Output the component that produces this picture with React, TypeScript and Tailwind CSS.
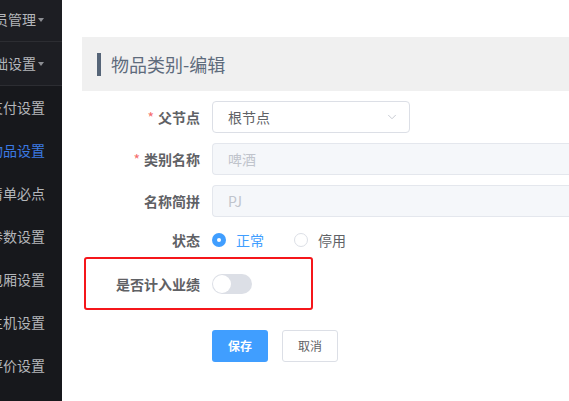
import { ChevronDown } from "lucide-react";

const font = { fontFamily: '"Noto Sans CJK SC", "Noto Sans", sans-serif' };

const subItems = ["支付设置", "物品设置", "清单必点", "参数设置", "包厢设置", "主机设置", "评价设置"];

function Sidebar() {
  return (
    <aside className="w-[62px] shrink-0 h-full overflow-hidden bg-[#17181c] text-[14px]">
      <div className="-mt-[2px]">
        {["会员管理", "基础设置"].map((t) => (
          <div key={t} className="h-[44px] flex items-center bg-[#1d1e23] border-b border-[#2c2d32] -ml-[20px] whitespace-nowrap text-[#b4b6ba]">
            <span>{t}</span>
            <span className="ml-[2px] w-0 h-0 border-l-[3px] border-r-[3px] border-t-[4px] border-l-transparent border-r-transparent border-t-[#8c8e93]" />
          </div>
        ))}
        {subItems.map((t) => (
          <div
            key={t}
            className={`h-[43px] flex items-center -ml-[11px] whitespace-nowrap ${t === "物品设置" ? "text-[#3b7ae3]" : "text-[#b4b6ba]"}`}
          >
            {t}
          </div>
        ))}
      </div>
    </aside>
  );
}

function Label({ text, required }: { text: string; required?: boolean }) {
  return (
    <div className="w-[130px] shrink-0 pr-3 text-right text-[14px] font-bold text-[#5f6165]">
      {required && <span className="text-[#f56c6c] mr-1 font-normal">*</span>}
      {text}
    </div>
  );
}

export default function App() {
  return (
    <div className="w-[569px] h-[401px] flex bg-white overflow-hidden" style={font}>
      <Sidebar />
      <main className="flex-1 min-w-0 pl-5 pt-[37px]">
        <div className="h-[54px] bg-[#f0f0f0] flex items-center pl-[15px]">
          <div className="w-[4px] h-[23px] bg-[#566578]" />
          <span className="ml-[10px] text-[18px] text-[#5e6b7c]">物品类别-编辑</span>
        </div>

        <div className="mt-[10px] flex flex-col gap-[10px]">
          <div className="flex items-center h-[32px]">
            <Label text="父节点" required />
            <div className="w-[198px] h-[32px] rounded-[4px] border border-[#dcdfe6] flex items-center justify-between pl-[15px] pr-[10px] text-[14px] text-[#606266]">
              <span>根节点</span>
              <ChevronDown className="w-[14px] h-[14px] text-[#c0c4cc]" strokeWidth={1.5} />
            </div>
          </div>

          <div className="flex items-center h-[32px]">
            <Label text="类别名称" required />
            <div className="flex-1 h-[32px] rounded-l-[4px] border border-r-0 border-[#e4e7ed] bg-[#f5f7fa] flex items-center pl-[15px] text-[14px] text-[#c0c4cc]">
              啤酒
            </div>
          </div>

          <div className="flex items-center h-[32px]">
            <Label text="名称简拼" />
            <div className="flex-1 h-[32px] rounded-l-[4px] border border-r-0 border-[#e4e7ed] bg-[#f5f7fa] flex items-center pl-[15px] text-[14px] text-[#c0c4cc]">
              PJ
            </div>
          </div>

          <div className="flex items-center h-[32px] -mt-[3px]">
            <Label text="状态" />
            <div className="flex items-center text-[14px]">
              <span className="w-[14px] h-[14px] rounded-full bg-[#409eff] flex items-center justify-center">
                <span className="w-[4px] h-[4px] rounded-full bg-white" />
              </span>
              <span className="ml-[10px] text-[#409eff]">正常</span>
              <span className="ml-[30px] w-[14px] h-[14px] rounded-full border border-[#dcdfe6] bg-white" />
              <span className="ml-[10px] text-[#606266]">停用</span>
            </div>
          </div>

          <div className="relative flex items-center h-[32px] mt-[2px]">
            <div className="absolute left-[2px] -top-[11px] w-[229px] h-[53px] border-2 border-[#f5161b] rounded-[3px]" />
            <Label text="是否计入业绩" />
            <div className="w-[40px] h-[20px] rounded-full bg-[#dcdfe6] flex items-center px-[1px]">
              <span className="w-[18px] h-[18px] rounded-full bg-white" />
            </div>
          </div>

          <div className="flex items-center mt-[20px]">
            <div className="w-[130px] shrink-0" />
            <button className="w-[56px] h-[32px] rounded-[3px] bg-[#409eff] text-white text-[12px] font-bold">保存</button>
            <button className="ml-[14px] w-[56px] h-[32px] rounded-[3px] border border-[#dcdfe6] bg-white text-[#606266] text-[12px]">取消</button>
          </div>
        </div>
      </main>
    </div>
  );
}
